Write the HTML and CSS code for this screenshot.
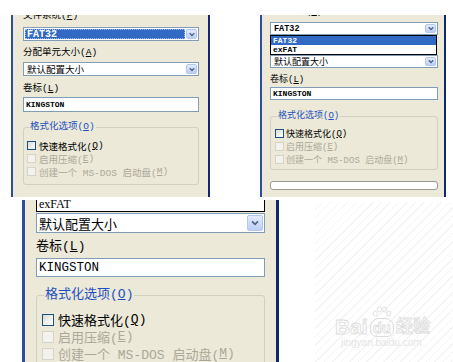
FILE: index.html
```html
<!DOCTYPE html>
<html>
<head>
<meta charset="utf-8">
<link rel="stylesheet" href="styles.css">
</head>
<body>
<div class="top">
  <section class="win p1">
    <div class="lbl lbl-fs">文件系统(<u>F</u>)</div>
    <div class="combo combo-fs sel"><span class="val">FAT32</span><span class="btn"><svg viewBox="0 0 8 6"><path d="M1 1.3L4 4.3L7 1.3"/></svg></span></div>
    <div class="lbl lbl-alloc">分配单元大小(<u>A</u>)</div>
    <div class="combo combo-alloc"><span class="val">默认配置大小</span><span class="btn"><svg viewBox="0 0 8 6"><path d="M1 1.3L4 4.3L7 1.3"/></svg></span></div>
    <div class="lbl lbl-vol">卷标(<u>L</u>)</div>
    <div class="input">KINGSTON</div>
    <fieldset class="group">
      <legend>格式化选项(<u>O</u>)</legend>
      <div class="chk"><span class="box"></span>快速格式化(<u>Q</u>)</div>
      <div class="chk off"><span class="box"></span>启用压缩(<u>E</u>)</div>
      <div class="chk off"><span class="box"></span>创建一个 MS-DOS 启动盘(<u>M</u>)</div>
    </fieldset>
  </section>

  <section class="win p2">
    <div class="lbl lbl-fs">文件系统(<u>F</u>)</div>
    <div class="combo combo-fs"><span class="val">FAT32</span><span class="btn"><svg viewBox="0 0 8 6"><path d="M1 1.3L4 4.3L7 1.3"/></svg></span></div>
    <div class="list">
      <div class="opt hi">FAT32</div>
      <div class="opt">exFAT</div>
    </div>
    <div class="combo combo-alloc"><span class="val">默认配置大小</span><span class="btn"><svg viewBox="0 0 8 6"><path d="M1 1.3L4 4.3L7 1.3"/></svg></span></div>
    <div class="lbl lbl-vol">卷标(<u>L</u>)</div>
    <div class="input">KINGSTON</div>
    <fieldset class="group">
      <legend>格式化选项(<u>O</u>)</legend>
      <div class="chk"><span class="box"></span>快速格式化(<u>Q</u>)</div>
      <div class="chk off"><span class="box"></span>启用压缩(<u>E</u>)</div>
      <div class="chk off"><span class="box"></span>创建一个 MS-DOS 启动盘(<u>M</u>)</div>
    </fieldset>
    <div class="progress"></div>
  </section>
</div>

<section class="win p3">
  <div class="list">
    <div class="opt">exFAT</div>
  </div>
  <div class="combo combo-alloc"><span class="val">默认配置大小</span><span class="btn"><svg viewBox="0 0 8 6"><path d="M1 1.3L4 4.3L7 1.3"/></svg></span></div>
  <div class="lbl lbl-vol">卷标(<u>L</u>)</div>
  <div class="input">KINGSTON</div>
  <fieldset class="group">
    <legend>格式化选项(<u>O</u>)</legend>
    <div class="chk"><span class="box"></span>快速格式化(<u>Q</u>)</div>
    <div class="chk off"><span class="box"></span>启用压缩(<u>E</u>)</div>
    <div class="chk off"><span class="box"></span>创建一个 MS-DOS 启动盘(<u>M</u>)</div>
  </fieldset>
</section>

<div class="stripes"></div>
<div class="watermark">
  <div class="wm-logo"><span class="wm-bai">Bai</span><span class="wm-du"><svg class="paw" viewBox="0 0 26 14"><ellipse cx="5" cy="9" rx="2.4" ry="3"/><ellipse cx="10" cy="4" rx="2.4" ry="3"/><ellipse cx="16" cy="4" rx="2.4" ry="3"/><ellipse cx="21" cy="9" rx="2.4" ry="3"/></svg><span class="du-txt">du</span></span><span class="wm-jy">经验</span></div>
  <div class="wm-url">jingyan.baidu.com</div>
</div>
</body>
</html>
```

FILE: styles.css
```css
* { box-sizing: border-box; }
html, body { margin: 0; background: #fff; }
body {
  width: 453px;
  height: 362px;
  overflow: hidden;
  position: relative;
  font-family: "Liberation Mono", "Noto Sans CJK SC", monospace;
  color: #000;
}
u { text-decoration: underline; }

.top {
  display: flex;
  align-items: flex-start;
  padding-top: 15px;
}

.win {
  background: #ece9d8;
  border-left: 2px solid #2d4d9f;
  border-right: 2px solid #0e2775;
  overflow: hidden;
  display: flex;
  flex-direction: column;
}

.lbl { white-space: nowrap; }

.combo {
  display: flex;
  align-items: stretch;
  border: 1px solid #7f9db9;
  background: #fff;
  padding: 1px;
  flex: none;
}
.val {
  flex: 1;
  display: flex;
  align-items: center;
  padding-left: 2px;
  white-space: nowrap;
  overflow: hidden;
}
.combo.sel .val {
  background: #316ac5;
  color: #fff;
  margin-right: 1px;
  outline: 1px dotted #9fb8e6;
  outline-offset: -1px;
}
.btn {
  display: flex;
  align-items: center;
  justify-content: center;
  background: linear-gradient(#e3ebfd, #bccff6);
  border: 1px solid #b2c6f2;
  border-radius: 2px;
}
.btn svg { fill: none; stroke: #4d6185; stroke-width: 1.7; }

.input {
  border: 1px solid #7f9db9;
  background: #fff;
  padding-left: 2px;
  display: flex;
  align-items: center;
  flex: none;
}

.list {
  border: 1px solid #000;
  background: #fff;
  flex: none;
}
.opt { padding-left: 2px; }
.opt.hi { background: #316ac5; color: #fff; }

.group {
  margin: 0;
  border: 1px solid #d0d0bf;
  border-radius: 3px;
  min-width: 0;
  flex: none;
}
.group legend {
  color: #1e4fc2;
  padding: 0 1px;
  margin-left: 2px;
  white-space: nowrap;
}
.chk {
  display: flex;
  align-items: center;
  white-space: nowrap;
}
.box {
  flex: none;
  border: 1px solid #1c5180;
  background: linear-gradient(135deg, #dcdcd5, #fff);
}
.chk.off { color: #aca899; }
.chk.off .box { border-color: #d6d4c8; background: #f3f2ec; }

.progress {
  flex: none;
  border: 1px solid #9c9a90;
  border-radius: 3px;
  background: #fff;
}

/* ---------- panel 1 (top-left, small) ---------- */
.p1 {
  margin-left: 11px;
  width: 199px;
  height: 182px;
  padding: 0 9px 0 10px;
  font-size: 9.5px;
}
.p1 .lbl { height: 12px; line-height: 12px; }
.p1 .lbl-fs { margin-top: -5px; }
.p1 .combo { height: 14px; font-size: 8.5px; }
.p1 .combo-fs { margin-top: 5px; font-size: 10px; font-weight: bold; }
.p1 .lbl-alloc { margin-top: 6px; }
.p1 .combo-alloc { margin-top: 3px; font-size: 9.5px; }
.p1 .lbl-vol { margin-top: 7px; }
.p1 .input { margin-top: 2px; height: 15px; font-size: 8px; font-weight: bold; }
.p1 .btn { width: 11px; }
.p1 .btn svg { width: 6px; height: 5px; }
.p1 .group { margin-top: 9px; padding: 6px 2px 6px 3px; }
.p1 .group legend { line-height: 12px; font-size: 9.5px; }
.p1 .chk { height: 13px; font-size: 9.5px; }
.p1 .box { width: 9px; height: 9px; margin-right: 3px; }

/* ---------- panel 2 (top-right, open dropdown) ---------- */
.p2 {
  margin-left: 50px;
  width: 186px;
  height: 182px;
  padding: 0 6px 0 8px;
  font-size: 9px;
}
.p2 .lbl { height: 12px; line-height: 12px; }
.p2 .lbl-fs { margin-top: -9px; }
.p2 .combo { height: 13px; font-size: 8.5px; }
.p2 .combo-fs { margin-top: 4px; font-weight: bold; }
.p2 .combo-alloc { font-size: 9px; }
.p2 .list { margin-right: 1px; font-size: 8px; font-weight: bold; }
.p2 .opt { height: 9px; line-height: 9px; }
.p2 .lbl-vol { margin-top: 6px; }
.p2 .input { margin-top: 1px; height: 13px; font-size: 8px; font-weight: bold; }
.p2 .btn { width: 11px; }
.p2 .btn svg { width: 6px; height: 5px; }
.p2 .group { margin-top: 10px; padding: 5px 2px 3px 4px; }
.p2 .group legend { line-height: 12px; font-size: 9px; }
.p2 .chk { height: 13px; font-size: 9px; }
.p2 .box { width: 9px; height: 9px; margin-right: 2px; }
.p2 .progress { margin-top: 11px; height: 9px; }

/* ---------- panel 3 (bottom, large) ---------- */
.p3 {
  margin: 3px 0 0 22px;
  width: 257px;
  height: 162px;
  border-left-width: 3px;
  border-right-width: 3px;
  padding: 0 11px;
  font-size: 13px;
}
.p3 .list { margin-top: -3px; font-size: 12px; font-family: "Liberation Serif", serif; }
.p3 .opt { height: 13px; line-height: 12px; }
.p3 .combo { margin-top: 1px; height: 20px; }
.p3 .val { padding-left: 1px; }
.p3 .btn { width: 16px; }
.p3 .btn svg { width: 8px; height: 6px; }
.p3 .lbl { height: 16px; line-height: 16px; }
.p3 .lbl-vol { margin-top: 6px; }
.p3 .input { margin-top: 3px; height: 19px; font-size: 12.5px; }
.p3 .group { margin-top: 10px; padding: 8px 3px 6px 5px; }
.p3 .group legend { line-height: 16px; }
.p3 .chk { height: 17px; }
.p3 .box { width: 12px; height: 12px; margin-right: 4px; }

/* ---------- watermark ---------- */
.stripes {
  position: absolute;
  left: 315px;
  top: 202px;
  width: 138px;
  height: 160px;
  background: repeating-linear-gradient(135deg, transparent 0 5px, #f4f4f4 5px 6px);
}
.watermark {
  position: absolute;
  left: 335px;
  top: 305px;
  color: transparent;
  -webkit-text-stroke: 0.8px #dcdcdc;
  font-family: "Liberation Sans", "Noto Sans CJK SC", sans-serif;
}
.wm-logo {
  display: flex;
  align-items: flex-end;
  height: 32px;
}
.wm-bai { font-size: 21px; line-height: 21px; font-weight: bold; }
.wm-du {
  display: flex;
  flex-direction: column;
  align-items: center;
  margin: 0 2px;
}
.paw { width: 22px; height: 12px; fill: none; stroke: #dcdcdc; stroke-width: 1; }
.du-txt {
  font-size: 15px;
  line-height: 17px;
  font-weight: bold;
  border: 1px solid #dcdcdc;
  border-radius: 9px 9px 7px 7px;
  padding: 0 2px;
}
.wm-jy { font-size: 17px; line-height: 20px; font-weight: bold; }
.wm-url {
  font-size: 10px;
  line-height: 12px;
  margin-left: 6px;
  -webkit-text-stroke: 0;
  color: #e4e4e4;
}
```
